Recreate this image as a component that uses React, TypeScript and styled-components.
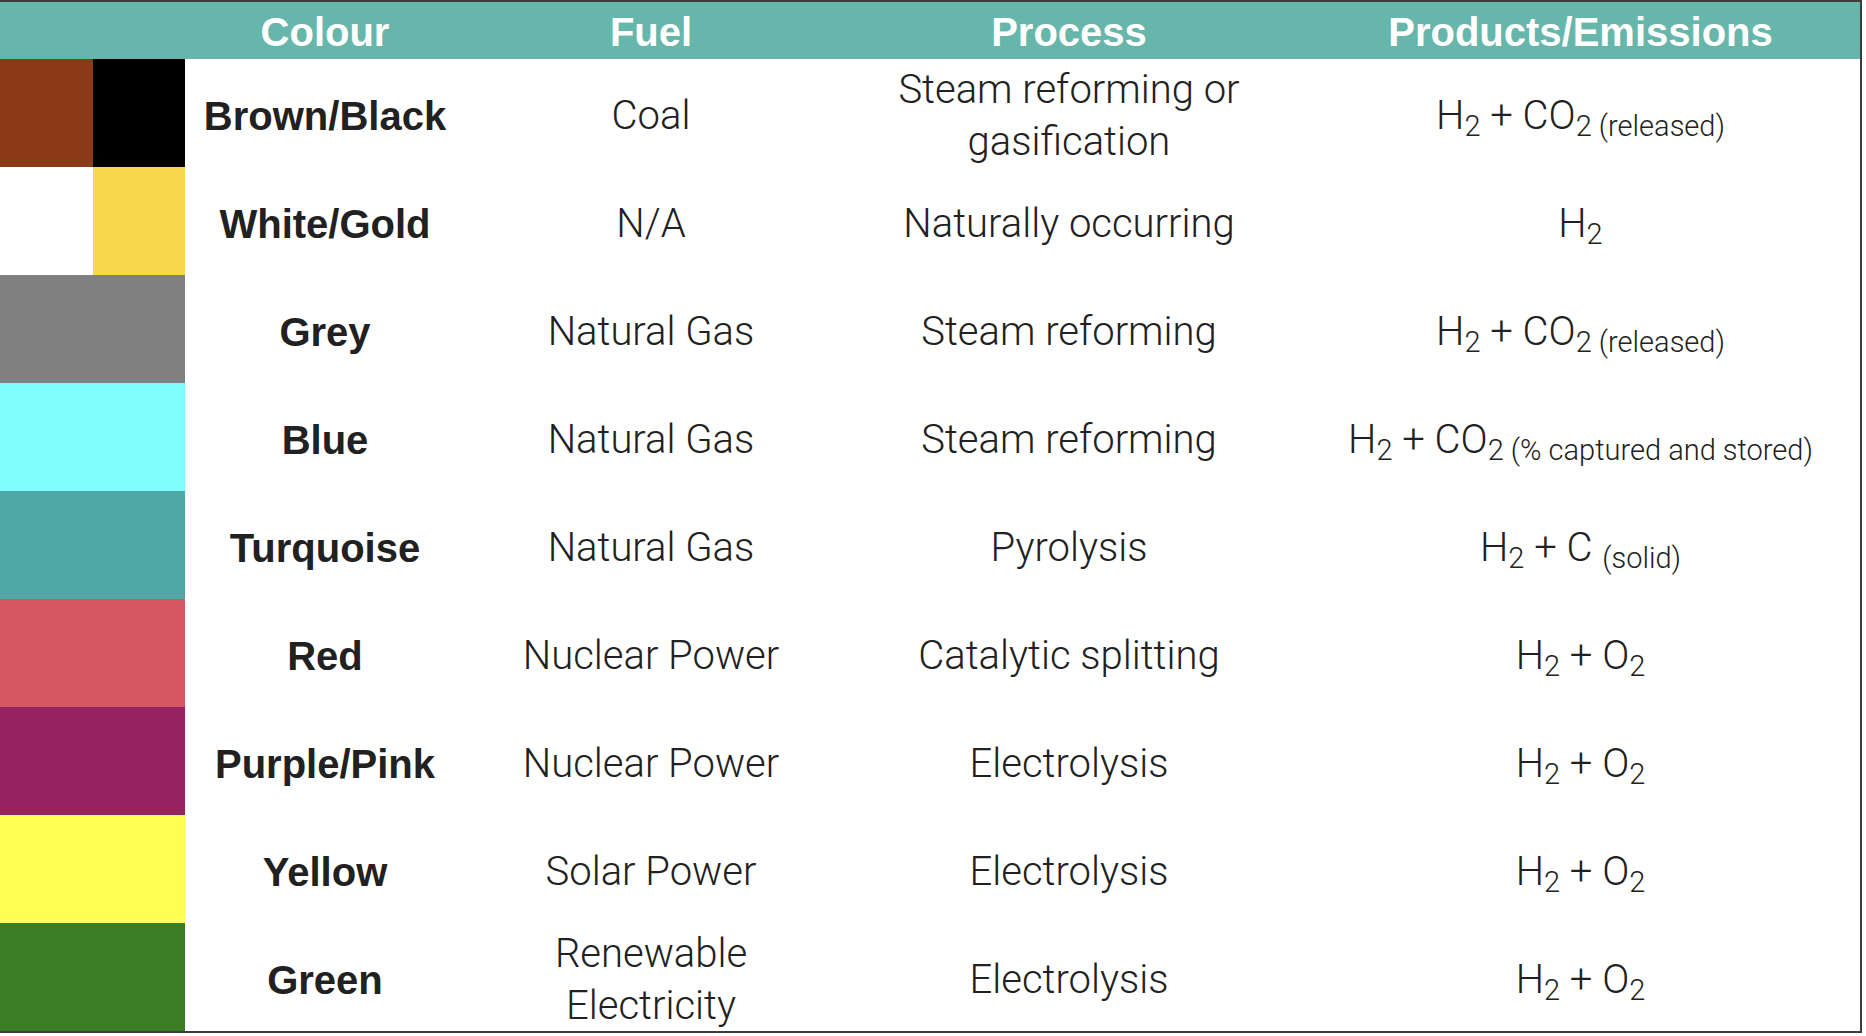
import React from "react";
import styled, { createGlobalStyle } from "styled-components";

const GlobalStyle = createGlobalStyle`
  html, body {
    margin: 0;
    padding: 0;
    background: #ffffff;
  }
`;

const Table = styled.div`
  width: 1862px;
  box-sizing: border-box;
  border-top: 2px solid #3d3d3d;
  border-right: 2px solid #3d3d3d;
  border-bottom: 2px solid #3d3d3d;
  display: grid;
  grid-template-columns: 185px 280px 372px 464px 1fr;
  grid-template-rows: 57px;
  grid-auto-rows: 108px;
  color: #212121;
`;

const HeadCell = styled.div`
  background: #66b6ab;
  color: #ffffff;
  font-family: "Liberation Sans", Arial, sans-serif;
  font-weight: 700;
  font-size: 40px;
  display: flex;
  align-items: center;
  justify-content: center;
  padding-top: 4px;
`;

const Swatch = styled.div`
  display: flex;
`;

const SwatchPart = styled.div<{ $bg: string }>`
  flex: 1;
  background: ${(p) => p.$bg};
`;

const NameCell = styled.div`
  font-family: "Liberation Sans", Arial, sans-serif;
  font-weight: 700;
  font-size: 40px;
  display: flex;
  align-items: center;
  justify-content: center;
  text-align: center;
  padding-top: 6px;
`;

const Cell = styled.div`
  font-family: Roboto, "Liberation Sans", sans-serif;
  font-weight: 300;
  font-size: 40px;
  line-height: 52px;
  display: flex;
  align-items: center;
  justify-content: center;
  text-align: center;
  white-space: nowrap;
  padding-top: 5px;
`;

const CellText = styled.div``;

const Sub = styled.span`
  font-size: 29px;
  vertical-align: -7px;
  line-height: 0;
`;

type Row = {
  swatch: string[];
  name: string;
  fuel: React.ReactNode;
  process: React.ReactNode;
  products: React.ReactNode;
};

const h2co2 = (note: string) => (
  <>
    H<Sub>2</Sub> + CO<Sub>2 {note}</Sub>
  </>
);

const h2o2 = (
  <>
    H<Sub>2</Sub> + O<Sub>2</Sub>
  </>
);

const rows: Row[] = [
  {
    swatch: ["#8b3a18", "#000000"],
    name: "Brown/Black",
    fuel: "Coal",
    process: (
      <>
        Steam reforming or
        <br />
        gasification
      </>
    ),
    products: h2co2("(released)"),
  },
  {
    swatch: ["#ffffff", "#f8d84a"],
    name: "White/Gold",
    fuel: "N/A",
    process: "Naturally occurring",
    products: (
      <>
        H<Sub>2</Sub>
      </>
    ),
  },
  {
    swatch: ["#808080"],
    name: "Grey",
    fuel: "Natural Gas",
    process: "Steam reforming",
    products: h2co2("(released)"),
  },
  {
    swatch: ["#7ffdfd"],
    name: "Blue",
    fuel: "Natural Gas",
    process: "Steam reforming",
    products: h2co2("(% captured and stored)"),
  },
  {
    swatch: ["#4fa8a6"],
    name: "Turquoise",
    fuel: "Natural Gas",
    process: "Pyrolysis",
    products: (
      <>
        H<Sub>2</Sub> + C <Sub>(solid)</Sub>
      </>
    ),
  },
  {
    swatch: ["#d75663"],
    name: "Red",
    fuel: "Nuclear Power",
    process: "Catalytic splitting",
    products: h2o2,
  },
  {
    swatch: ["#952362"],
    name: "Purple/Pink",
    fuel: "Nuclear Power",
    process: "Electrolysis",
    products: h2o2,
  },
  {
    swatch: ["#ffff55"],
    name: "Yellow",
    fuel: "Solar Power",
    process: "Electrolysis",
    products: h2o2,
  },
  {
    swatch: ["#3a7d23"],
    name: "Green",
    fuel: (
      <>
        Renewable
        <br />
        Electricity
      </>
    ),
    process: "Electrolysis",
    products: h2o2,
  },
];

export default function App() {
  return (
    <>
      <GlobalStyle />
      <Table>
        <HeadCell />
        <HeadCell>Colour</HeadCell>
        <HeadCell>Fuel</HeadCell>
        <HeadCell>Process</HeadCell>
        <HeadCell>Products/Emissions</HeadCell>
        {rows.map((row) => (
          <React.Fragment key={row.name}>
            <Swatch>
              {row.swatch.map((c, i) => (
                <SwatchPart key={i} $bg={c} />
              ))}
            </Swatch>
            <NameCell>{row.name}</NameCell>
            <Cell>
              <CellText>{row.fuel}</CellText>
            </Cell>
            <Cell>
              <CellText>{row.process}</CellText>
            </Cell>
            <Cell>
              <CellText>{row.products}</CellText>
            </Cell>
          </React.Fragment>
        ))}
      </Table>
    </>
  );
}
